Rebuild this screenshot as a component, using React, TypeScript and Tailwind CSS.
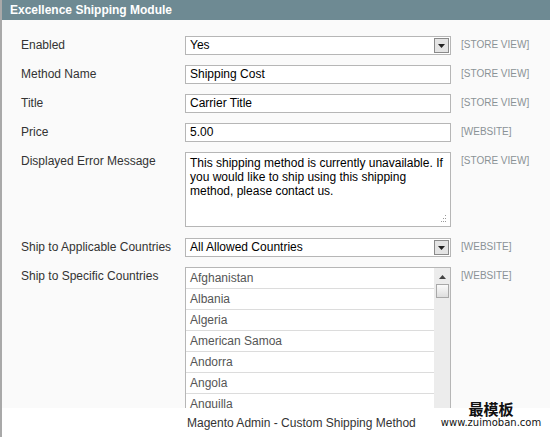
import React from 'react';

const COUNTRIES = ['Afghanistan', 'Albania', 'Algeria', 'American Samoa', 'Andorra', 'Angola', 'Anquilla'];

const SelectArrow: React.FC = () => (
  <div className="absolute right-[1px] top-[1px] bottom-[1px] w-[15px] flex items-center justify-center bg-[#e4e4e4] border border-[#8a8a8a]">
    <svg width="7" height="4" viewBox="0 0 7 4">
      <path d="M0 0 L7 0 L3.5 4 Z" fill="#222" />
    </svg>
  </div>
);

const Scope: React.FC<{ text: string }> = ({ text }) => (
  <div className="pl-[10px] pt-[2px] text-[10px] text-[#8a9296] leading-[14px]">{text}</div>
);

const Row: React.FC<{ label: string; scope: string; children: React.ReactNode; mb?: string }> = ({ label, scope, children, mb = 'mb-[10px]' }) => (
  <div className={`flex ${mb}`}>
    <div className="w-[164px] shrink-0 pt-[1px] text-[12px] leading-[16px] text-[#333]">{label}</div>
    <div className="w-[266px] shrink-0">{children}</div>
    <Scope text={scope} />
  </div>
);

const inputCls = 'h-[19px] w-full border border-[#b6b6b6] bg-white px-[4px] text-[12px] leading-[17px] text-black';

const App: React.FC = () => {
  return (
    <div className="relative w-[550px] h-[437px] bg-white overflow-hidden font-['Liberation_Sans',Arial,sans-serif]">
      <div className="h-[408px] overflow-hidden border-l-[2px] border-[#a9a9a9] bg-[#fafafa]">
        <div className="h-[20px] -ml-[2px] bg-[#6e8a93] pl-[10px] text-[12px] font-bold leading-[20px] text-white">
          Excellence Shipping Module
        </div>
        <div className="pl-[19px] pt-[16px]">
          <Row label="Enabled" scope="[STORE VIEW]">
            <div className={`relative ${inputCls}`}>
              Yes
              <SelectArrow />
            </div>
          </Row>
          <Row label="Method Name" scope="[STORE VIEW]">
            <div className={inputCls}>Shipping Cost</div>
          </Row>
          <Row label="Title" scope="[STORE VIEW]">
            <div className={inputCls}>Carrier Title</div>
          </Row>
          <Row label="Price" scope="[WEBSITE]">
            <div className={inputCls}>5.00</div>
          </Row>
          <Row label="Displayed Error Message" scope="[STORE VIEW]" mb="mb-[11px]">
            <div className="relative h-[75px] w-full border border-[#b6b6b6] bg-white px-[4px] pt-[3px] text-[12px] leading-[14px] text-black">
              This shipping method is currently unavailable. If you would like to ship using this shipping method, please contact us.
              <svg className="absolute right-[3px] bottom-[3px]" width="8" height="8" viewBox="0 0 8 8">
                <g fill="#9a9a9a">
                  <rect x="6" y="0" width="1" height="1" />
                  <rect x="4" y="3" width="1" height="1" />
                  <rect x="6" y="3" width="1" height="1" />
                  <rect x="2" y="6" width="1" height="1" />
                  <rect x="4" y="6" width="1" height="1" />
                  <rect x="6" y="6" width="1" height="1" />
                </g>
              </svg>
            </div>
          </Row>
          <Row label="Ship to Applicable Countries" scope="[WEBSITE]">
            <div className={`relative ${inputCls}`}>
              All Allowed Countries
              <SelectArrow />
            </div>
          </Row>
          <Row label="Ship to Specific Countries" scope="[WEBSITE]">
            <div className="flex h-[144px] w-full overflow-hidden border border-[#b6b6b6] bg-white">
              <div className="flex-1">
                {COUNTRIES.map((c) => (
                  <div key={c} className="h-[21px] border-b border-[#dcdcdc] px-[4px] text-[12px] leading-[20px] text-[#555]">
                    {c}
                  </div>
                ))}
              </div>
              <div className="w-[16px] bg-[#ececec] flex flex-col items-center">
                <svg className="mt-[7px]" width="7" height="4" viewBox="0 0 7 4">
                  <path d="M0 4 L7 4 L3.5 0 Z" fill="#444" />
                </svg>
                <div className="mt-[5px] h-[14px] w-[13px] border border-[#a8a8a8] bg-gradient-to-b from-[#fafafa] to-[#dedede]" />
              </div>
            </div>
          </Row>
        </div>
      </div>
      <div className="flex h-[29px] border-l-[2px] border-[#a9a9a9]">
        <div className="pl-[185px] pt-[8px] text-[12px] leading-[15px] text-[#333]">
          Magento Admin - Custom Shipping Method
        </div>
      </div>
      <div className="absolute left-[440px] top-[400px] w-[102px] flex flex-col items-center">
        <div className="text-[15px] font-bold leading-[17px] text-[#111] font-['Noto_Sans_CJK_SC',serif]">最模板</div>
        <div className="text-[10px] leading-[11px] text-[#111] font-['DejaVu_Sans',sans-serif]">www.zuimoban.com</div>
      </div>
    </div>
  );
};

export default App;
